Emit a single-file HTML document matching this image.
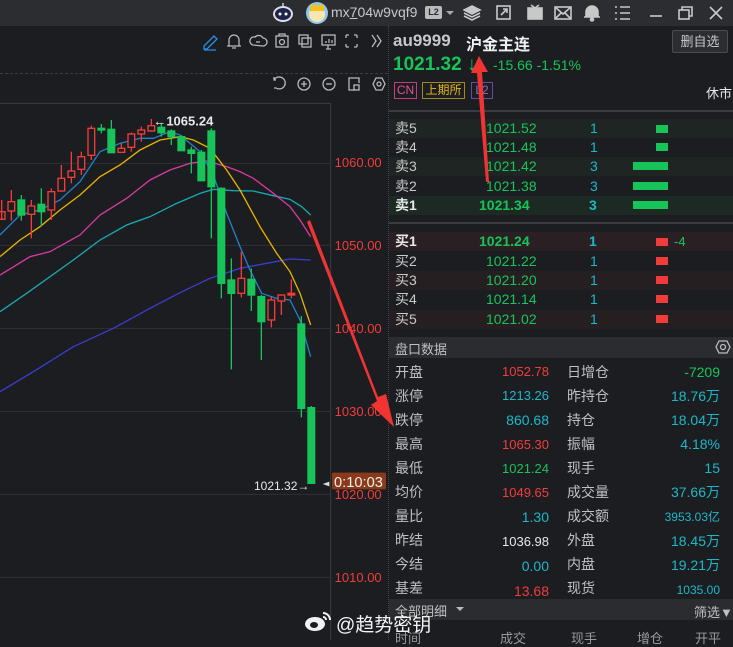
<!DOCTYPE html>
<html><head><meta charset="utf-8"><style>
*{margin:0;padding:0;box-sizing:border-box}
body{width:733px;height:640px;overflow:hidden;background:#1c1d21;font-family:"Liberation Sans","Noto Sans CJK SC",sans-serif;position:relative;color:#c8c8c8}
.a{position:absolute;white-space:nowrap}
.top{position:absolute;left:0;top:0;width:733px;height:26px;background:#2b2d31}
.r{color:#f23c3c}.g{color:#17c45a}.c{color:#1cb8c8}.w{color:#e8e8e8}
.lbl{font-size:14px;color:#c0c0c0}
.row{position:absolute;left:389px;width:344px;height:19px}
.ob{position:absolute;font-size:14px;line-height:19px}
</style></head><body>
<div class="top"></div>
<svg class="a" style="left:270px;top:2px" width="26" height="22"><ellipse cx="13" cy="12" rx="10" ry="8" fill="#dde" /><ellipse cx="13" cy="12" rx="8" ry="6" fill="#1e2448"/><circle cx="10" cy="12" r="1.5" fill="#fff"/><circle cx="16" cy="12" r="1.5" fill="#fff"/><line x1="13" y1="4" x2="13" y2="1" stroke="#ccd" stroke-width="1.5"/></svg>
<svg class="a" style="left:305px;top:1px" width="24" height="24"><circle cx="12" cy="12" r="11" fill="#8ec8ee"/><circle cx="12" cy="13" r="8" fill="#f8e6b0"/><rect x="5" y="4" width="14" height="6" fill="#f2c020"/></svg>
<div class="a" style="left:331px;top:4px;font-size:14px;color:#c8c8c8">mx<u>7</u>04w9vqf9</div>
<div class="a" style="left:425px;top:6px;width:17px;height:13px;background:#bbb;color:#2b2d31;font-size:9px;font-weight:bold;text-align:center;line-height:13px;border-radius:2px">L2</div>
<svg class="a" style="left:445px;top:10px" width="10" height="6"><path d="M1 1L5 5L9 1Z" fill="#aaa"/></svg>
<svg class="a" style="left:463px;top:4px" width="270" height="18" fill="none" stroke="#c8c8c8" stroke-width="1.6">
<path d="M9 2L17 6L9 10L1 6Z" fill="#c8c8c8"/><path d="M1 9L9 13L17 9M1 12L9 16L17 12"/>
<rect x="34" y="2" width="13" height="13"/><path d="M38 11L44 5M40 5H44V9"/>
<rect x="65" y="4" width="14" height="11" fill="#c8c8c8"/><path d="M68 1L72 4L76 1"/>
<rect x="92" y="3" width="16" height="12"/><path d="M92 3L100 10L108 3M92 15L98 9M108 15L102 9"/>
<path d="M123 13V8A6 6 0 0 1 135 8V13H121H137Z" fill="#c8c8c8"/><circle cx="129" cy="15.5" r="1.5" fill="#c8c8c8"/>
<path d="M152 3H154M157 3H167M152 9H154M157 9H167M152 15H154M157 15H167"/>
<path d="M187 12H199"/>
<rect x="216" y="6" width="10" height="9"/><path d="M219 6V3H229V12H226"/>
<path d="M247 3L259 15M259 3L247 15"/>
</svg>
<svg class="a" style="left:200px;top:31px" width="190" height="20" fill="none" stroke="#b8b8b8" stroke-width="1.3">
<path d="M4 15L14 5L17 8L7 18H4Z M4 19H16" stroke="#2a8ee8"/>
<path d="M29 15V9A5 5 0 0 1 39 9V15H27H41M32 17H36"/>
<path d="M53 14A4 4 0 0 1 55 6A5 5 0 0 1 63 7A4 4 0 0 1 63 15Z M56 11H60"/>
<rect x="76" y="5" width="12" height="11"/><circle cx="82" cy="11" r="2.5"/><path d="M79 5V3H85V5"/>
<rect x="99" y="4" width="9" height="9"/><rect x="102" y="7" width="9" height="9"/>
<rect x="122" y="4" width="13" height="10"/><path d="M126 18H131M128 14V18M126 12V10M129 12V8M132 12V9"/>
<path d="M146 4H149M146 4V7M157 4H154M157 4V7M146 16H149M146 16V13M157 16H154M157 16V13"/>
<path d="M172 4L176 10L172 16M177 4L181 10L177 16"/>
</svg>
<div class="a" style="left:0;top:73px;width:388px;border-top:1px dashed #3a3c42"></div>
<svg class="a" style="left:270px;top:75px" width="118" height="18" fill="none" stroke="#b8b8b8" stroke-width="1.3">
<path d="M6 5H4V2M4 5A6 6 0 1 1 6 13H4"/>
<circle cx="34" cy="9" r="6"/><path d="M31 9H37M34 6V12"/>
<circle cx="59" cy="9" r="6"/><path d="M56 9H62"/>
<path d="M85 15H79V3H89V8"/><rect x="84" y="10" width="5" height="5"/>
<path d="M103 9L106 3H112L115 9L112 15H106Z"/><circle cx="109" cy="9" r="2"/>
</svg>
<svg class="a" style="left:0;top:100px" width="390" height="540" viewBox="0 0 1170 1620">
<g stroke="#2e3035" stroke-width="3">
<line x1="0" y1="190" x2="990" y2="190"/><line x1="0" y1="436" x2="990" y2="436"/><line x1="0" y1="685" x2="990" y2="685"/><line x1="0" y1="934" x2="990" y2="934"/><line x1="0" y1="1183" x2="990" y2="1183"/><line x1="0" y1="1432" x2="990" y2="1432"/>
<line x1="0" y1="10" x2="992" y2="10" stroke="#3a3c42"/><line x1="992" y1="10" x2="992" y2="1620" stroke="#3a3c42"/>
</g>
<g font-size="39" fill="#f23c3c" font-family="Liberation Sans">
<text x="1004" y="201">1060.00</text><text x="1004" y="450">1050.00</text><text x="1004" y="699">1040.00</text><text x="1004" y="948">1030.00</text><text x="1004" y="1197">1020.00</text><text x="1004" y="1446">1010.00</text>
</g>
<g fill="none" stroke-width="4">
<polyline stroke="#3c3cd0" points="0,875 100,815 220,740 340,685 450,625 540,578 630,535 720,505 800,490 870,477 932,480"/>
<polyline stroke="#1aa8b0" points="0,635 80,580 150,530 220,480 300,420 380,375 450,350 530,310 600,280 640,268 700,272 760,273 820,287 870,298 905,320 932,345"/>
<polyline stroke="#d43b9e" points="0,525 90,470 150,455 240,405 300,345 380,295 450,240 510,210 570,190 620,183 680,200 720,215 760,235 820,280 870,320 900,360 932,410"/>
<polyline stroke="#e5b400" points="0,470 60,420 120,380 180,330 240,285 300,230 360,195 420,150 480,120 540,110 580,120 630,145 680,210 720,270 780,380 830,460 870,515 900,580 932,675"/>
<polyline stroke="#2080c8" points="0,405 60,345 120,330 180,300 240,245 300,155 360,130 420,115 460,115 510,95 540,105 600,155 640,225 680,340 720,440 750,510 785,580 830,595 870,600 900,660 932,770"/>
</g>
<g stroke-width="4">
<g stroke="#f23c3c" fill="none">
<line x1="5" y1="300" x2="5" y2="360"/><rect x="-5" y="335" width="20" height="23"/>
<line x1="34" y1="270" x2="34" y2="362"/><rect x="24" y="305" width="20" height="28" fill="#1c1d21"/>
<line x1="94" y1="300" x2="94" y2="415"/><rect x="84" y="318" width="20" height="25" fill="#1c1d21"/>
<line x1="154" y1="265" x2="154" y2="360"/><rect x="144" y="275" width="20" height="55" fill="#1c1d21"/>
<line x1="184" y1="195" x2="184" y2="275"/><rect x="174" y="235" width="20" height="38" fill="#1c1d21"/>
<line x1="214" y1="155" x2="214" y2="250"/><rect x="204" y="213" width="20" height="19" fill="#1c1d21"/>
<line x1="244" y1="155" x2="244" y2="225"/><rect x="234" y="170" width="20" height="38" fill="#1c1d21"/>
<line x1="274" y1="77" x2="274" y2="180"/><rect x="264" y="85" width="20" height="81" fill="#1c1d21"/>
<line x1="364" y1="130" x2="364" y2="157"/><rect x="354" y="145" width="20" height="12" fill="#1c1d21"/>
<line x1="394" y1="98" x2="394" y2="155"/><rect x="384" y="102" width="20" height="40" fill="#1c1d21"/>
<line x1="424" y1="80" x2="424" y2="125"/><rect x="414" y="90" width="20" height="12" fill="#1c1d21"/>
<line x1="454" y1="57" x2="454" y2="95"/><rect x="444" y="77" width="20" height="16" fill="#1c1d21"/>
<line x1="724" y1="455" x2="724" y2="592"/><rect x="714" y="535" width="20" height="45" fill="#1c1d21"/>
<line x1="814" y1="590" x2="814" y2="682"/><rect x="804" y="600" width="20" height="60" fill="#1c1d21"/>
<line x1="844" y1="583" x2="844" y2="645"/><rect x="834" y="585" width="20" height="18" fill="#1c1d21"/>
<line x1="874" y1="538" x2="874" y2="595"/><rect x="864" y="580" width="20" height="5" fill="#f23c3c"/>
</g>
<g stroke="#17c45a" fill="#17c45a">
<line x1="64" y1="285" x2="64" y2="362"/><rect x="54" y="300" width="20" height="45"/>
<line x1="124" y1="265" x2="124" y2="378"/><rect x="114" y="313" width="20" height="22"/>
<line x1="304" y1="72" x2="304" y2="100"/><rect x="294" y="85" width="20" height="5"/>
<line x1="334" y1="60" x2="334" y2="158"/><rect x="324" y="88" width="20" height="70"/>
<line x1="484" y1="68" x2="484" y2="110"/><rect x="474" y="82" width="20" height="16"/>
<line x1="514" y1="88" x2="514" y2="135"/><rect x="504" y="93" width="20" height="17"/>
<line x1="544" y1="105" x2="544" y2="152"/><rect x="534" y="110" width="20" height="42"/>
<line x1="574" y1="140" x2="574" y2="220"/><rect x="564" y="150" width="20" height="10"/>
<line x1="604" y1="150" x2="604" y2="242"/><rect x="594" y="157" width="20" height="85"/>
<line x1="634" y1="85" x2="634" y2="415"/><rect x="624" y="93" width="20" height="167"/>
<line x1="664" y1="262" x2="664" y2="595"/><rect x="654" y="265" width="20" height="285"/>
<line x1="694" y1="475" x2="694" y2="808"/><rect x="684" y="540" width="20" height="40"/>
<line x1="754" y1="505" x2="754" y2="633"/><rect x="744" y="538" width="20" height="47"/>
<line x1="784" y1="585" x2="784" y2="780"/><rect x="774" y="590" width="20" height="75"/>
<line x1="904" y1="648" x2="904" y2="952"/><rect x="894" y="672" width="20" height="253"/>
<line x1="934" y1="918" x2="934" y2="1150"/><rect x="924" y="923" width="20" height="227"/>
</g>
</g>
<g fill="#e8e8e8" font-family="Liberation Sans">
<text x="460" y="76" font-size="39" font-weight="bold">←1065.24</text>
<text x="762" y="1170" font-size="36">1021.32→</text>
</g>
<path d="M968 1152L988 1145V1159Z" fill="#ddd"/>
<rect x="996" y="1118" width="162" height="50" rx="4" fill="#8a3a18"/>
<text x="1002" y="1161" font-size="44" fill="#f0f0f0" font-family="Liberation Sans">0:10:03</text>
</svg>
<div class="a" style="left:388px;top:26px;height:614px;border-left:1px dotted #44464c"></div>
<div class="a" style="left:393px;top:31px;font-size:17px;font-weight:bold;color:#c8c8cc">au9999</div>
<div class="a" style="left:466px;top:31px;font-size:16px;font-weight:bold;color:#f0f0f0">沪金主连</div>
<div class="a" style="left:672px;top:30px;width:56px;height:23px;border:1px solid #4a4c52;background:#2b2d31;border-radius:2px;font-size:13px;color:#c8c8c8;text-align:center;line-height:21px">删自选</div>
<div class="a g" style="left:393px;top:54px;font-size:19px;font-weight:bold">1021.32 ↓</div>
<div class="a g" style="left:493px;top:57px;font-size:14px">-15.66 -1.51%</div>
<div class="a" style="left:394px;top:82px;width:23px;height:17px;border:1px solid #c0407a;color:#e0509a;font-size:12px;text-align:center;line-height:15px">CN</div>
<div class="a" style="left:422px;top:82px;width:43px;height:17px;border:1px solid #a08820;color:#e8b820;font-size:12px;text-align:center;line-height:15px">上期所</div>
<div class="a" style="left:471px;top:82px;width:22px;height:17px;border:1px solid #6a4aa0;color:#8a6ad0;font-size:12px;text-align:center;line-height:15px">L2</div>
<div class="a w" style="left:706px;top:83px;font-size:13px">休市</div>
<div class="a" style="left:389px;top:110px;width:344px;border-top:2px solid #3a3c42"></div>
<div class="row" style="top:119px;background:#1e2522"></div>
<div class="row" style="top:157px;background:#1e2522"></div>
<div class="row" style="top:196px;background:#1d2a24"></div>
<div class="a" style="left:389px;top:222px;width:344px;border-top:2px solid #3a3c42"></div>
<div class="row" style="top:232px;background:#2a1f22"></div>
<div class="row" style="top:271px;background:#261f21"></div>
<div class="row" style="top:310px;background:#261f21"></div>
<div class="ob" style="left:395px;top:119px">卖5</div><div class="ob g" style="left:486px;top:119px">1021.52</div><div class="ob c" style="left:590px;top:119px">1</div><div class="a" style="left:656px;top:125px;width:12px;height:8px;background:#17c45a"></div>
<div class="ob" style="left:395px;top:138px">卖4</div><div class="ob g" style="left:486px;top:138px">1021.48</div><div class="ob c" style="left:590px;top:138px">1</div><div class="a" style="left:656px;top:143px;width:12px;height:8px;background:#17c45a"></div>
<div class="ob" style="left:395px;top:157px">卖3</div><div class="ob g" style="left:486px;top:157px">1021.42</div><div class="ob c" style="left:590px;top:157px">3</div><div class="a" style="left:633px;top:162px;width:35px;height:8px;background:#17c45a"></div>
<div class="ob" style="left:395px;top:177px">卖2</div><div class="ob g" style="left:486px;top:177px">1021.38</div><div class="ob c" style="left:590px;top:177px">3</div><div class="a" style="left:633px;top:182px;width:35px;height:8px;background:#17c45a"></div>
<div class="ob w" style="left:395px;top:196px;font-weight:bold">卖1</div><div class="ob g" style="left:479px;top:196px;font-weight:bold">1021.34</div><div class="ob c" style="left:589px;top:196px;font-weight:bold">3</div><div class="a" style="left:633px;top:201px;width:35px;height:8px;background:#17c45a"></div>
<div class="ob w" style="left:395px;top:232px;font-weight:bold">买1</div><div class="ob g" style="left:479px;top:232px;font-weight:bold">1021.24</div><div class="ob c" style="left:589px;top:232px;font-weight:bold">1</div><div class="a" style="left:656px;top:238px;width:12px;height:8px;background:#f23c3c"></div><div class="ob g" style="left:674px;top:232px;font-size:13px">-4</div>
<div class="ob" style="left:395px;top:252px">买2</div><div class="ob g" style="left:486px;top:252px">1021.22</div><div class="ob c" style="left:590px;top:252px">1</div><div class="a" style="left:656px;top:257px;width:12px;height:8px;background:#f23c3c"></div>
<div class="ob" style="left:395px;top:271px">买3</div><div class="ob g" style="left:486px;top:271px">1021.20</div><div class="ob c" style="left:590px;top:271px">1</div><div class="a" style="left:656px;top:276px;width:12px;height:8px;background:#f23c3c"></div>
<div class="ob" style="left:395px;top:290px">买4</div><div class="ob g" style="left:486px;top:290px">1021.14</div><div class="ob c" style="left:590px;top:290px">1</div><div class="a" style="left:656px;top:295px;width:12px;height:8px;background:#f23c3c"></div>
<div class="ob" style="left:395px;top:310px">买5</div><div class="ob g" style="left:486px;top:310px">1021.02</div><div class="ob c" style="left:590px;top:310px">1</div><div class="a" style="left:656px;top:315px;width:12px;height:8px;background:#f23c3c"></div>
<div class="a" style="left:389px;top:337px;width:344px;height:21px;background:#2a2c30"></div>
<div class="a" style="left:395px;top:339px;font-size:13px;color:#c0c0c0">盘口数据</div>
<svg class="a" style="left:714px;top:339px" width="18" height="16" fill="none" stroke="#bbb" stroke-width="1.3"><path d="M2 8L5 2H13L16 8L13 14H5Z"/><circle cx="9" cy="8" r="2.5"/></svg>
<div class="a lbl" style="left:395px;top:360px;line-height:24px">开盘<br>涨停<br>跌停<br>最高<br>最低<br>均价<br>量比<br>昨结<br>今结<br>基差</div>
<div class="a" style="left:470px;top:360px;width:79px;text-align:right;font-size:13px;line-height:24px"><span class="r">1052.78</span><br><span class="c">1213.26</span><br><span class="c" style="font-size:14px">860.68</span><br><span class="r">1065.30</span><br><span class="g">1021.24</span><br><span class="r">1049.65</span><br><span class="c" style="font-size:14px">1.30</span><br><span class="w">1036.98</span><br><span class="c" style="font-size:14px">0.00</span><br><span class="r" style="font-size:14px">13.68</span></div>
<div class="a lbl" style="left:567px;top:360px;line-height:24px">日增仓<br>昨持仓<br>持仓<br>振幅<br>现手<br>成交量<br>成交额<br>外盘<br>内盘<br>现货</div>
<div class="a" style="left:620px;top:360px;width:100px;text-align:right;font-size:14px;line-height:24px"><span class="g">-7209</span><br><span class="c">18.76万</span><br><span class="c">18.04万</span><br><span class="c">4.18%</span><br><span class="c">15</span><br><span class="c">37.66万</span><br><span class="c" style="font-size:12px">3953.03亿</span><br><span class="c">18.45万</span><br><span class="c">19.21万</span><br><span class="c" style="font-size:12px">1035.00</span></div>
<div class="a" style="left:389px;top:599px;width:344px;height:21px;background:#2a2c30"></div>
<div class="a" style="left:395px;top:601px;font-size:13px;color:#c0c0c0">全部明细</div>
<svg class="a" style="left:455px;top:606px" width="10" height="6"><path d="M1 1L5 5L9 1Z" fill="#bbb"/></svg>
<div class="a" style="left:694px;top:602px;font-size:13px;color:#c0c0c0">筛选▼</div>
<div class="a" style="left:395px;top:628px;font-size:13px;color:#999">时间</div>
<div class="a" style="left:500px;top:628px;font-size:13px;color:#999">成交</div>
<div class="a" style="left:571px;top:628px;font-size:13px;color:#999">现手</div>
<div class="a" style="left:637px;top:628px;font-size:13px;color:#999">增仓</div>
<div class="a" style="left:695px;top:628px;font-size:13px;color:#999">开平</div>
<svg class="a" style="left:303px;top:609px" width="30" height="26"><ellipse cx="12" cy="15" rx="10" ry="7" fill="#f2f2f2"/><ellipse cx="11" cy="16" rx="4" ry="3" fill="#1c1d21"/><path d="M20 4A7 7 0 0 1 27 11M20 8A3 3 0 0 1 23 11" stroke="#f2f2f2" stroke-width="2" fill="none"/></svg>
<div class="a" style="left:336px;top:610px;font-size:19px;color:#f4f4f4">@趋势密钥</div>
<svg class="a" style="left:0;top:0" width="733" height="640">
<path d="M307 222L310 220L378 397L386 394L394 427L371 405L377 401Z" fill="#f03434"/>
<path d="M486 182L489 182L482 72L488 72L479 56L471 73L477 73Z" fill="#f03434"/>
</svg>
</body></html>
